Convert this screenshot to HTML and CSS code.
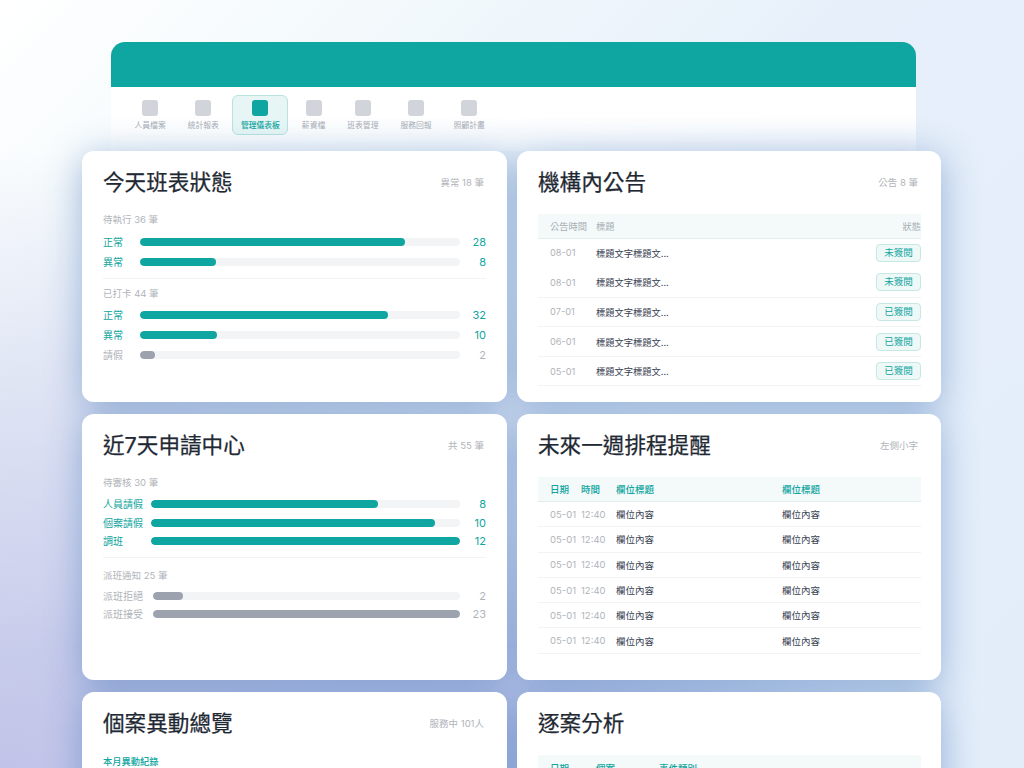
FILE: index.html
```html
<!DOCTYPE html>
<html lang="zh-Hant">
<head>
<meta charset="utf-8">
<title>管理儀表板</title>
<link rel="stylesheet" href="styles.css">
</head>
<body>
<div class="page">
  <div class="window">
    <div class="topbar"></div>
    <nav class="nav">
      <div class="nav-item"><span class="nav-icon"></span><span>人員檔案</span></div>
      <div class="nav-item"><span class="nav-icon"></span><span>統計報表</span></div>
      <div class="nav-item active"><span class="nav-icon"></span><span>管理儀表板</span></div>
      <div class="nav-item"><span class="nav-icon"></span><span>薪資檔</span></div>
      <div class="nav-item"><span class="nav-icon"></span><span>班表管理</span></div>
      <div class="nav-item"><span class="nav-icon"></span><span>服務回報</span></div>
      <div class="nav-item"><span class="nav-icon"></span><span>照顧計畫</span></div>
    </nav>
  </div>

  <main class="grid">
    <section class="card card-a">
      <header class="card-head"><h2>今天班表狀態</h2><span class="sub">異常 18 筆</span></header>
      <div class="group-label">待執行 36 筆</div>
      <div class="bar-row teal short"><span class="lbl">正常</span><span class="track"><i style="width:82.8%"></i></span><span class="val">28</span></div>
      <div class="bar-row teal short"><span class="lbl">異常</span><span class="track"><i style="width:23.6%"></i></span><span class="val">8</span></div>
      <div class="divider"></div>
      <div class="group-label">已打卡 44 筆</div>
      <div class="bar-row teal short"><span class="lbl">正常</span><span class="track"><i style="width:77.4%"></i></span><span class="val">32</span></div>
      <div class="bar-row teal short"><span class="lbl">異常</span><span class="track"><i style="width:24%"></i></span><span class="val">10</span></div>
      <div class="bar-row grey short"><span class="lbl">請假</span><span class="track"><i style="width:4.8%"></i></span><span class="val">2</span></div>
    </section>

    <section class="card card-a">
      <header class="card-head"><h2>機構內公告</h2><span class="sub">公告 8 筆</span></header>
      <table class="tbl notice">
        <thead><tr><th class="c-date">公告時間</th><th>標題</th><th class="c-status">狀態</th></tr></thead>
        <tbody>
          <tr><td class="muted">08-01</td><td>標題文字標題文...</td><td class="c-status"><span class="badge">未簽閱</span></td></tr>
          <tr><td class="muted">08-01</td><td>標題文字標題文...</td><td class="c-status"><span class="badge">未簽閱</span></td></tr>
          <tr><td class="muted">07-01</td><td>標題文字標題文...</td><td class="c-status"><span class="badge">已簽閱</span></td></tr>
          <tr><td class="muted">06-01</td><td>標題文字標題文...</td><td class="c-status"><span class="badge">已簽閱</span></td></tr>
          <tr><td class="muted">05-01</td><td>標題文字標題文...</td><td class="c-status"><span class="badge">已簽閱</span></td></tr>
        </tbody>
      </table>
    </section>

    <section class="card card-b">
      <header class="card-head"><h2>近7天申請中心</h2><span class="sub">共 55 筆</span></header>
      <div class="group-label">待審核 30 筆</div>
      <div class="bar-row teal wide tight"><span class="lbl">人員請假</span><span class="track"><i style="width:73.4%"></i></span><span class="val">8</span></div>
      <div class="bar-row teal wide tight"><span class="lbl">個案請假</span><span class="track"><i style="width:92%"></i></span><span class="val">10</span></div>
      <div class="bar-row teal wide tight"><span class="lbl">調班</span><span class="track"><i style="width:100%"></i></span><span class="val">12</span></div>
      <div class="divider"></div>
      <div class="group-label">派班通知 25 筆</div>
      <div class="bar-row grey wider tight"><span class="lbl">派班拒絕</span><span class="track"><i style="width:9.7%"></i></span><span class="val">2</span></div>
      <div class="bar-row grey wider tight"><span class="lbl">派班接受</span><span class="track"><i style="width:100%"></i></span><span class="val">23</span></div>
    </section>

    <section class="card card-b">
      <header class="card-head"><h2>未來一週排程提醒</h2><span class="sub">左側小字</span></header>
      <table class="tbl schedule">
        <thead><tr><th class="c-d">日期</th><th class="c-t">時間</th><th class="c-f">欄位標題</th><th>欄位標題</th></tr></thead>
        <tbody>
          <tr><td class="muted">05-01</td><td class="muted">12:40</td><td>欄位內容</td><td>欄位內容</td></tr>
          <tr><td class="muted">05-01</td><td class="muted">12:40</td><td>欄位內容</td><td>欄位內容</td></tr>
          <tr><td class="muted">05-01</td><td class="muted">12:40</td><td>欄位內容</td><td>欄位內容</td></tr>
          <tr><td class="muted">05-01</td><td class="muted">12:40</td><td>欄位內容</td><td>欄位內容</td></tr>
          <tr><td class="muted">05-01</td><td class="muted">12:40</td><td>欄位內容</td><td>欄位內容</td></tr>
          <tr><td class="muted">05-01</td><td class="muted">12:40</td><td>欄位內容</td><td>欄位內容</td></tr>
        </tbody>
      </table>
    </section>

    <section class="card card-c">
      <header class="card-head"><h2>個案異動總覽</h2><span class="sub">服務中 101人</span></header>
      <div class="group-label accent">本月異動紀錄</div>
    </section>

    <section class="card card-c">
      <header class="card-head"><h2>逐案分析</h2></header>
      <table class="tbl analysis">
        <thead><tr><th class="c-date">日期</th><th class="c-case">個案</th><th>事件類別</th></tr></thead>
      </table>
    </section>
  </main>
</div>
</body>
</html>
```
FILE: styles.css
```css
* { box-sizing: border-box; }
html, body { margin: 0; padding: 0; height: 100%; }
body {
  font-family: Inter, "Noto Sans CJK TC", "Noto Sans", sans-serif;
  color: #1f2933;
  background: #fff;
}
.page {
  height: 768px;
  overflow: hidden;
  padding-top: 42px;
  background:
    radial-gradient(ellipse 800px 620px at 0px 768px, #c1c4e8 0%, rgba(193,196,232,0) 100%),
    radial-gradient(ellipse 560px 260px at 420px 790px, rgba(150,165,225,.75) 0%, rgba(150,165,225,0) 100%),
    linear-gradient(135deg, #fff 0%, #f4fafc 20%, #e6effa 50%, #e3edfa 100%);
}
.window {
  margin-left: 111px;
  width: 805px;
  height: 109px;
}
.topbar {
  height: 45px;
  background: #0fa5a0;
  border-radius: 14px 14px 0 0;
}
.nav {
  height: 64px;
  padding: 8px 0 0 15px;
  display: flex;
  align-items: flex-start;
  gap: 5px;
  background: linear-gradient(180deg, #fff 0%, #fff 45%, rgba(255,255,255,.35) 100%);
}
.nav-item {
  height: 40px;
  padding: 3.5px 7.5px 0;
  display: flex;
  flex-direction: column;
  align-items: center;
  gap: 3.5px;
  font-size: 7.8px;
  line-height: 12px;
  color: #a9aeb6;
  border: 1px solid transparent;
  border-radius: 6px;
}
.nav-icon {
  width: 16px;
  height: 16px;
  border-radius: 3px;
  background: #d1d5db;
}
.nav-item.active {
  background: #e7f6f5;
  border-color: #b7e3e0;
  color: #0fa5a0;
  font-weight: 500;
}
.nav-item.active .nav-icon { background: #0fa5a0; }

.grid {
  margin-left: 82px;
  width: 859px;
  display: grid;
  grid-template-columns: 425px 424px;
  grid-template-rows: 251px 266px 200px;
  column-gap: 10px;
  row-gap: 12px;
  isolation: isolate;
}
.card {
  position: relative;
  background: #fff;
  border-radius: 12px;
  padding: 15px 21px 0;
}
.card::before {
  content: "";
  position: absolute;
  inset: 0;
  z-index: -1;
  border-radius: 12px;
  box-shadow: 0 6px 36px rgba(50,105,175,.45);
}
.card-head {
  display: flex;
  justify-content: space-between;
  align-items: center;
  height: 32px;
  margin-bottom: 15px;
}
.card-c .card-head { margin-bottom: 16px; }
.card-head h2 {
  margin: 0;
  font-size: 21.6px;
  line-height: 32px;
  font-weight: 400;
  -webkit-text-stroke: .25px #1f2933;
  color: #1f2933;
}
.sub {
  font-size: 9.5px;
  color: #b0b4ba;
  padding-right: 2px;
}
.group-label {
  font-size: 9.5px;
  line-height: 14px;
  color: #b0b4ba;
  margin-bottom: 5px;
}
.card-a .group-label { margin-bottom: 5.5px; }
.card-a .divider + .group-label { margin-bottom: 4.5px; }
.group-label.accent { color: #0fa5a0; font-weight: 500; font-size: 9.25px; }
.bar-row {
  display: flex;
  align-items: center;
  height: 19.7px;
  font-size: 10px;
}
.bar-row.tight { height: 18.5px; }
.lbl { width: 37px; flex: none; line-height: 14px; }
.wide .lbl { width: 48px; }
.wider .lbl { width: 50px; }
.track {
  flex: 1;
  height: 8px;
  border-radius: 4px;
  background: #f3f4f6;
  overflow: hidden;
}
.track i { display: block; height: 100%; border-radius: 4px; }
.val {
  width: 26px;
  flex: none;
  text-align: right;
  font-size: 11px;
}
.teal .lbl, .teal .val { color: #0fa5a0; }
.teal i { background: #0fa5a0; }
.grey .lbl, .grey .val { color: #b0b4ba; }
.grey i { background: #9ca3af; }
.divider { height: 1px; background: #f1f3f5; margin: 6px 0 8px; }
.card-b .divider { margin-bottom: 11px; }
.card-b .divider + .group-label { margin-bottom: 4px; }

.tbl {
  width: calc(100% + 1px);
  border-collapse: collapse;
  table-layout: fixed;
  font-size: 9.5px;
}
.tbl th {
  font-weight: 400;
  text-align: left;
  background: #f3faf9;
  border-bottom: 1px solid #e2eeec;
  padding: 0;
  height: 25px;
}
.tbl td { padding: 0; color: #374151; border-bottom: 1px solid #f1f3f5; }
.tbl td.muted { color: #b0b4ba; }
.tbl th:first-child, .tbl td:first-child { padding-left: 12px; }

.notice { margin-top: 16px; font-size: 9.25px; }
.notice th { color: #a9aeb6; height: 24px; }
.notice td { height: 29.6px; }
.notice .c-date { width: 58px; }
.notice .c-status { text-align: right; }
.badge {
  display: inline-block;
  width: 45px;
  height: 18px;
  line-height: 16px;
  text-align: center;
  font-size: 9.5px;
  color: #0fa5a0;
  background: #edf8f7;
  border: 1px solid #c5e8e5;
  border-radius: 4px;
}
.notice tbody tr:first-child td { border-bottom-color: transparent; }

.schedule { margin-top: 15.5px; }
.schedule th { color: #0fa5a0; font-weight: 500; }
.schedule td { height: 25.3px; }
.schedule .c-d { width: 43px; }
.schedule .c-t { width: 35px; }
.schedule .c-f { width: 166px; }

.analysis th { color: #0fa5a0; font-weight: 500; height: 26px; }
.analysis .c-date { width: 58px; }
.analysis .c-case { width: 63px; }
```
